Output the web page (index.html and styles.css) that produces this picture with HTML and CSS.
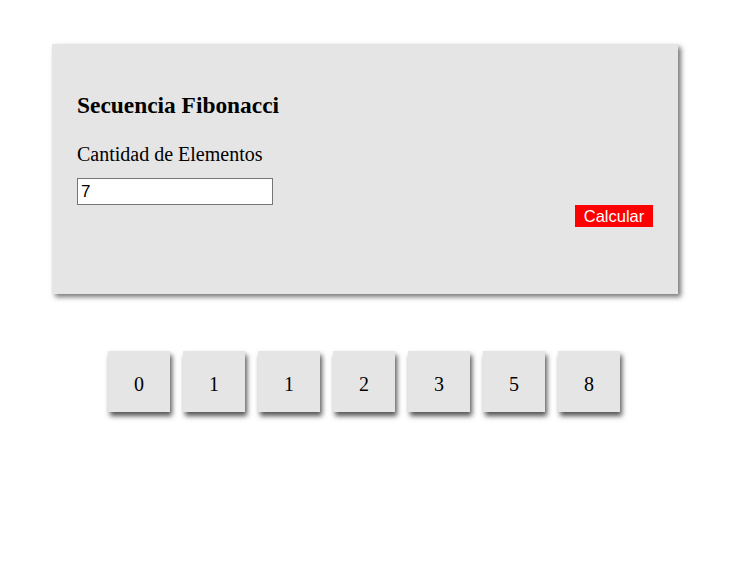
FILE: index.html
```html
<!DOCTYPE html>
<html lang="es">
<head>
<meta charset="utf-8">
<title>Secuencia Fibonacci</title>
<link rel="stylesheet" href="styles.css">
</head>
<body>
<div class="card">
  <h2 class="title">Secuencia Fibonacci</h2>
  <label class="label" for="cant">Cantidad de Elementos</label>
  <input class="input" id="cant" type="text" value="7">
  <div class="actions"><button class="btn">Calcular</button></div>
</div>
<div class="list">
  <div class="item">0</div>
  <div class="item">1</div>
  <div class="item">1</div>
  <div class="item">2</div>
  <div class="item">3</div>
  <div class="item">5</div>
  <div class="item">8</div>
</div>
</body>
</html>
```
FILE: styles.css
```css
body {
  margin: 8px;
  padding-bottom: 40px;
  background: #fff;
  font-family: "Liberation Serif", "Times New Roman", serif;
  color: #000;
}
.card {
  box-sizing: border-box;
  width: 626px;
  height: 250px;
  margin: 36px 0 0 44px;
  padding: 47px 25px 0 25px;
  background: #e5e5e5;
  box-shadow: 3px 3px 5px #777;
  display: flex;
  flex-direction: column;
  align-items: flex-start;
}
.title {
  margin: 0;
  font-size: 23.4px;
  line-height: 28px;
  font-weight: bold;
}
.label {
  margin-top: 24px;
  font-size: 20px;
  line-height: 23px;
}
.input {
  box-sizing: border-box;
  margin: 12px 0 0 0;
  width: 196px;
  height: 27px;
  padding: 1px 3px;
  border: 1px solid #767676;
  background: #fff;
  font-family: "Liberation Sans", Arial, sans-serif;
  font-size: 17px;
  color: #000;
}
.actions {
  align-self: stretch;
  display: flex;
  justify-content: flex-end;
}
.btn {
  box-sizing: border-box;
  width: 78px;
  height: 22px;
  padding: 0;
  border: none;
  background: #ff0000;
  color: #fff;
  font-family: "Liberation Sans", Arial, sans-serif;
  font-size: 16.5px;
  line-height: 22px;
}
.list {
  display: flex;
  gap: 13px;
  margin: 57px 0 0 100px;
  padding-bottom: 20px;
}
.item {
  box-sizing: border-box;
  width: 62px;
  height: 61px;
  padding-top: 22px;
  background: #e5e5e5;
  box-shadow: 2px 4px 5px #555;
  text-align: center;
  font-size: 20px;
  line-height: 23px;
}
```
